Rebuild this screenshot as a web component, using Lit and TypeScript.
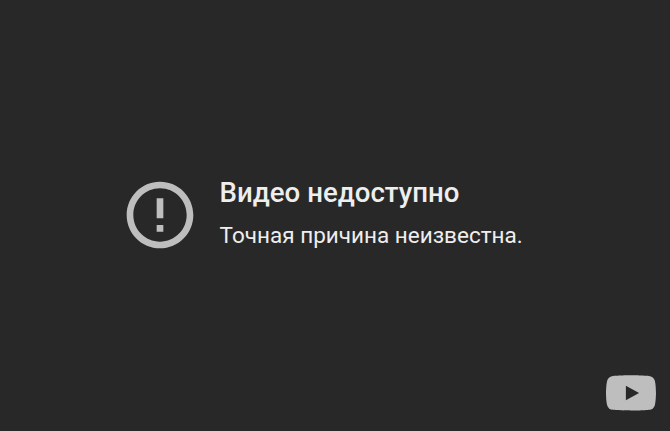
import { LitElement, html, css } from 'lit';
import { customElement } from 'lit/decorators.js';

@customElement('app-root')
export class PlayerError extends LitElement {
  static styles = css`
    :host {
      display: block;
    }

    .player {
      display: grid;
      grid-template-rows: 1fr auto;
      box-sizing: border-box;
      height: 100vh;
      min-height: 431px;
      padding: 55px 14px 20px 120px;
      overflow: hidden;
      background: #282828;
      font-family: Roboto, "Liberation Sans", sans-serif;
    }

    .error {
      display: flex;
      align-items: center;
    }

    .icon {
      display: block;
      width: 80px;
      height: 80px;
      margin-right: 19.6px;
      fill: #bebebe;
    }

    .message {
      padding-bottom: 3px;
    }

    .reason {
      color: #eee;
      font-size: 27.6px;
      font-weight: 500;
      line-height: 36px;
      white-space: nowrap;
    }

    .subreason {
      margin-top: 7px;
      color: #eee;
      font-size: 22.5px;
      line-height: 34px;
      white-space: nowrap;
    }

    .logo {
      display: block;
      justify-self: end;
      width: 50px;
      height: 36px;
    }
  `;

  render() {
    return html`
      <div class="player">
        <div class="error">
          <svg class="icon" viewBox="0 0 24 24">
            <path d="M11 15h2v2h-2zm0-8h2v6h-2zm.99-5C6.47 2 2 6.48 2 12s4.47 10 9.99 10C17.52 22 22 17.52 22 12S17.52 2 11.99 2zM12 20c-4.42 0-8-3.58-8-8s3.58-8 8-8 8 3.58 8 8-3.58 8-8 8z"></path>
          </svg>
          <div class="message">
            <div class="reason">Видео недоступно</div>
            <div class="subreason">Точная причина неизвестна.</div>
          </div>
        </div>
        <svg class="logo" viewBox="0 0 68 48">
          <path fill="#bebebe" d="M66.5 7.7c-.8-2.9-2.5-5.4-5.4-6.2C55.8.1 34 0 34 0S12.200.1 6.900 1.500C4 2.300 2.300 4.800 1.500 7.700.1 13 0 24 0 24s.1 11 1.500 16.300c.8 2.900 2.500 5.400 5.400 6.200C12.200 47.900 34 48 34 48s21.800-.1 27.100-1.500c2.900-.8 4.600-3.300 5.400-6.200C67.900 35 68 24 68 24s-.1-11-1.500-16.300z"></path>
          <path fill="#282828" d="M45 24L27 14v20z"></path>
        </svg>
      </div>
    `;
  }
}
